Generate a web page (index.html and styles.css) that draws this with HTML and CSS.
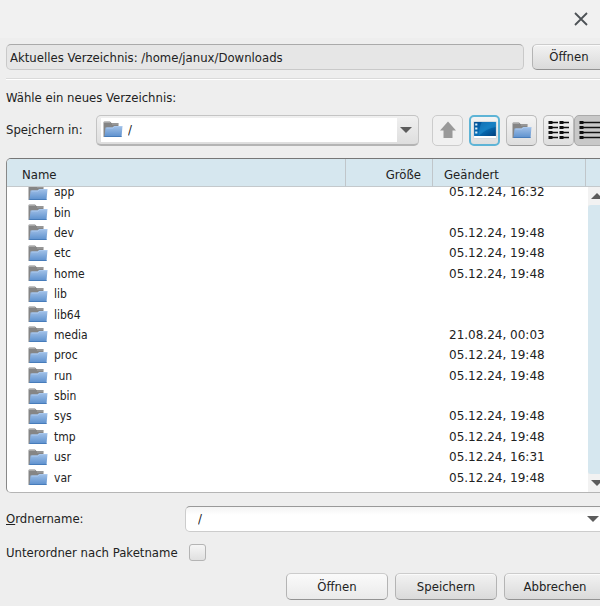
FILE: index.html
```html
<!DOCTYPE html>
<html lang="de">
<head>
    <meta charset="UTF-8">
    <meta name="viewport" content="width=device-width, initial-scale=1.0">
    <title>Verzeichnis</title>
    <link rel="stylesheet" href="styles.css">
</head>
<body>
    <svg width="0" height="0" class="defs">
        <defs>
            <linearGradient id="blue" x1="0" y1="0" x2="0" y2="1">
                <stop offset="0" stop-color="#a3c2e8"/>
                <stop offset="1" stop-color="#5b8fcd"/>
            </linearGradient>
            <linearGradient id="screen" x1="0" y1="0" x2="1" y2="1">
                <stop offset="0" stop-color="#004a90"/>
                <stop offset="0.5" stop-color="#0870b8"/>
                <stop offset="1" stop-color="#003f7c"/>
            </linearGradient>
            <symbol id="folder" viewBox="0 0 20 17">
                <path d="M0.5 16V1.5Q0.5 0.5 1.5 0.5H7L8.5 2H15.5V5H17V12L15 16Z" fill="#858585"/>
                <path d="M1 1.5H7M9 3H15" stroke="#a8a8a8" fill="none"/>
                <path d="M2.5 6.5H9.5L11 5H19.5L18.5 16H1.5Z" fill="url(#blue)"/>
                <path d="M1.5 15.5H18.5" stroke="#477cba"/>
                <path d="M3.5 7H10L11.5 5.5H19" stroke="#a9c8ee" fill="none"/>
            </symbol>
        </defs>
    </svg>

    <header class="titlebar">
        <button class="close" aria-label="Schließen">
            <svg width="14" height="14" viewBox="0 0 14 14"><path d="M1 1L13 13M13 1L1 13" stroke="#4d5256" stroke-width="1.8" fill="none"/></svg>
        </button>
    </header>

    <main class="dialog">
        <div class="current">
            <input class="path" type="text" value="Aktuelles Verzeichnis: /home/janux/Downloads" aria-label="Aktuelles Verzeichnis" readonly>
            <button class="btn btn-small">Öffnen</button>
        </div>
        <hr>
        <p class="hint">Wähle ein neues Verzeichnis:</p>

        <div class="lookin">
            <label for="dir">Spe<u>i</u>chern in:</label>
            <div class="combo">
                <svg class="folder"><use href="#folder"/></svg>
                <select id="dir"><option>/</option></select>
                <span class="arrow down"></span>
            </div>
            <div class="tools">
                <button class="tool flat" aria-label="Eine Ebene nach oben" disabled>
                    <svg width="18" height="18" viewBox="0 0 18 18"><path d="M9 0.5L17 9.5H13.5V17H4.5V9.5H1Z" fill="#999"/></svg>
                </button>
                <button class="tool focused" aria-label="Desktop">
                    <svg width="24" height="18" viewBox="0 0 22 18" preserveAspectRatio="none">
                        <rect x="0.5" y="0.5" width="21" height="17" rx="1" fill="#fff" stroke="#d5dbe0"/>
                        <rect x="1" y="1" width="20" height="14" fill="url(#screen)"/>
                        <path d="M8 1H21V6Q13 7 5 15Q6 6 8 1Z" fill="#2f9bd8" opacity="0.4"/>
                        <path d="M2 3.5H4M2 7.5H4M2 11.5H4" stroke="#d8edf8" stroke-width="2"/>
                    </svg>
                </button>
                <button class="tool" aria-label="Neuer Ordner">
                    <svg class="folder"><use href="#folder"/></svg>
                </button>
                <div class="views">
                    <button class="tool" aria-label="Liste">
                        <svg width="22" height="18" viewBox="0 0 22 18" fill="none" stroke="#111">
                            <path d="M2.5 0V18M13.5 0V18" stroke-width="4" stroke-dasharray="3 2"/>
                            <path d="M3 1.5H10M3 6.5H10M3 11.5H10M3 16.5H10M14 1.5H21M14 6.5H21M14 11.5H21M14 16.5H21" stroke-width="1.5"/>
                        </svg>
                    </button>
                    <button class="tool pressed" aria-label="Details">
                        <svg width="22" height="18" viewBox="0 0 22 18" fill="none" stroke="#111">
                            <path d="M2.5 0V18" stroke-width="4" stroke-dasharray="3 2"/>
                            <path d="M3 1.5H22M3 6.5H22M3 11.5H22M3 16.5H22" stroke-width="1.5"/>
                        </svg>
                    </button>
                </div>
            </div>
        </div>

        <div class="pane">
            <div class="scroll" id="files">
                <table>
                    <colgroup><col><col class="size"><col class="date"><col class="rest"></colgroup>
                    <thead>
                        <tr><th>Name</th><th class="right">Größe</th><th>Geändert</th><th></th></tr>
                    </thead>
                    <tbody id="rows"></tbody>
                </table>
            </div>
            <div class="scrollbar">
                <button aria-label="Nach oben"><span class="arrow up"></span></button>
                <div class="thumb"></div>
                <button aria-label="Nach unten"><span class="arrow down"></span></button>
            </div>
        </div>

        <div class="form">
            <label for="name"><u>O</u>rdnername:</label>
            <div class="field">
                <input id="name" type="text" value="/">
                <span class="arrow down"></span>
            </div>
            <label for="sub">Unterordner nach Paketname</label>
            <input id="sub" class="check" type="checkbox">
        </div>

        <div class="actions">
            <button class="btn light">Öffnen</button>
            <button class="btn">Speichern</button>
            <button class="btn">Abbrechen</button>
        </div>
    </main>

    <script>
        const entries = [
            ['app', '05.12.24, 16:32'],
            ['bin', ''],
            ['dev', '05.12.24, 19:48'],
            ['etc', '05.12.24, 19:48'],
            ['home', '05.12.24, 19:48'],
            ['lib', ''],
            ['lib64', ''],
            ['media', '21.08.24, 00:03'],
            ['proc', '05.12.24, 19:48'],
            ['run', '05.12.24, 19:48'],
            ['sbin', ''],
            ['sys', '05.12.24, 19:48'],
            ['tmp', '05.12.24, 19:48'],
            ['usr', '05.12.24, 16:31'],
            ['var', '05.12.24, 19:48']
        ];

        document.getElementById('rows').innerHTML = entries.map(([name, date]) => `
            <tr>
                <td><span class="entry"><svg class="folder"><use href="#folder"/></svg>${name}</span></td>
                <td></td>
                <td class="when">${date}</td>
                <td></td>
            </tr>`).join('');

        // list is scrolled to its end
        const files = document.getElementById('files');
        files.scrollTop = files.scrollHeight;
    </script>
</body>
</html>
```
FILE: styles.css
```css
* { box-sizing: border-box; }

body {
    margin: 0;
    background: #eee;
    color: #222;
    font: 13px/16px "DejaVu Sans Condensed", "DejaVu Sans", sans-serif;
    overflow: hidden;
}

button, input, select {
    font: inherit;
    color: inherit;
    margin: 0;
}

.defs { position: absolute; }

.titlebar {
    display: flex;
    justify-content: flex-end;
    align-items: center;
    height: 38px;
    padding-right: 12px;
    background: #f1f1f1;
}
.close {
    display: flex;
    padding: 0;
    border: 0;
    background: none;
}

/* the right edge runs past the window */
.dialog {
    margin-right: -6px;
    padding: 6px 0 0 6px;
}

.current {
    display: flex;
    gap: 8px;
}
.path {
    flex: 1;
    height: 26px;
    padding: 0 3px;
    border: 1px solid #c9c9c9;
    border-top-color: #aaa;
    border-radius: 5px;
    background: #e6e6e6;
}

.btn {
    width: 102px;
    height: 27px;
    padding: 0;
    border: 1px solid #b4b4b4;
    border-top-color: #ccc;
    border-bottom-color: #939393;
    border-radius: 5px;
    background: linear-gradient(#f2f2f2, #dadada);
    box-shadow: inset 0 1px #fafafa;
}
.btn-small { width: 74px; height: 26px; }
.light { background: linear-gradient(#fafafa, #eaeaea); }

hr {
    height: 2px;
    margin: 8px 0;
    border: 0;
    border-top: 1px solid #dadada;
    border-bottom: 1px solid #fff;
}

.hint { margin: 10px 0 8px; }

.lookin {
    display: flex;
    align-items: center;
    height: 32px;
}
.lookin label { width: 90px; }

.combo {
    display: flex;
    align-items: center;
    flex: 1;
    height: 31px;
    padding: 2px 6px;
    border: 1px solid #c4c4c4;
    border-bottom: 2px solid #b4b4b4;
    border-radius: 5px;
    background:
        linear-gradient(#fff, #fff) 4px 2px / calc(100% - 25px) calc(100% - 4px) no-repeat,
        linear-gradient(#f0f0f0, #dedede);
}
.combo select {
    flex: 1;
    padding: 0 5px;
    border: 0;
    background: none;
    appearance: none;
}

.folder {
    width: 20px;
    height: 17px;
    flex: none;
}

.arrow {
    width: 0;
    border: 6px solid transparent;
}
.down { border-top-color: #5c5c5c; border-bottom: 0; }
.up { border-bottom-color: #5c5c5c; border-top: 0; }

.tools {
    display: flex;
    gap: 6px;
    margin-left: 13px;
    margin-right: 1px;
}
.views { display: flex; }
.tool {
    display: flex;
    align-items: center;
    justify-content: center;
    width: 31px;
    height: 31px;
    padding: 0;
    border: 1px solid #bbb;
    border-bottom-color: #999;
    border-radius: 5px;
    background: linear-gradient(#f4f4f4, #dedede);
}
.flat { border-color: #ccc; background: #f0f0f0; }
.focused { border: 2px solid #5eb4d6; }
.pressed { border-color: #aaa; background: #c8c8c8; }

.pane {
    position: relative;
    height: 335px;
    margin-top: 12px;
    border: 1px solid #b5b5b5;
    border-top-color: #777;
    border-left-color: #888;
    border-radius: 5px;
    background: #fff;
    overflow: hidden;
}
.scroll {
    height: 100%;
    overflow: hidden;
}
table {
    width: 100%;
    height: 334px;
    margin-bottom: 4px;
    border-collapse: separate;
    border-spacing: 0;
    table-layout: fixed;
}
.size { width: 87px; }
.date { width: 153px; }
.rest { width: 19px; }
th {
    position: sticky;
    top: 0;
    height: 28px;
    padding: 5px 11px 0;
    border-right: 1px solid #c0c6ca;
    border-bottom: 1px solid #c4c9cc;
    background: #d6e7ef;
    font-weight: normal;
    text-align: left;
}
th:first-child { padding-left: 15px; }
th:last-child { padding: 0; }
.right { text-align: right; }
td {
    padding: 0;
    font-size: 12px;
}
.entry {
    display: flex;
    align-items: center;
    gap: 6px;
    padding-left: 21px;
}
.when {
    padding-left: 16px;
    font-family: "DejaVu Sans", sans-serif;
}

.scrollbar {
    position: absolute;
    top: 28px;
    right: 0;
    bottom: 0;
    width: 17px;
    display: flex;
    flex-direction: column;
    background: #eee;
}
.scrollbar button {
    display: flex;
    align-items: center;
    justify-content: center;
    height: 18px;
    padding: 0;
    border: 0;
    background: #f2f2f2;
}
.thumb {
    flex: 1;
    border-radius: 3px;
    background: #d6e7ef;
}

.form {
    display: grid;
    grid-template-columns: 179px 1fr;
    align-items: center;
    row-gap: 12px;
    margin-top: 13px;
}
.field {
    display: flex;
    align-items: center;
    height: 26px;
    padding-right: 6px;
    border: 1px solid #ccc;
    border-top-color: #999;
    border-radius: 5px;
    background: linear-gradient(#f4f4f4, #fff 8px);
}
.field input {
    flex: 1;
    padding: 0 12px;
    border: 0;
    background: none;
}
.check {
    width: 17px;
    height: 17px;
    margin-left: 4px;
    border: 1px solid #b4b4b4;
    border-radius: 3px;
    background: linear-gradient(#f6f6f6, #e0e0e0);
    appearance: none;
}

.actions {
    display: flex;
    justify-content: flex-end;
    gap: 7px;
    margin-top: 12px;
}
```
